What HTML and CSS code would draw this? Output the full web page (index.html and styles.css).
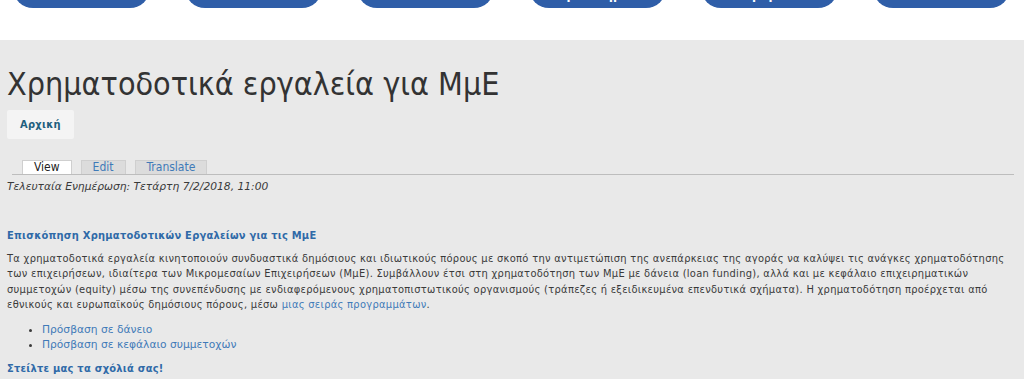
FILE: index.html
```html
<!DOCTYPE html>
<html lang="el">
<head>
<meta charset="utf-8">
<title>Χρηματοδοτικά εργαλεία για ΜμΕ</title>
<link rel="stylesheet" href="styles.css">
</head>
<body>
<header class="topbar">
  <nav class="navbtns">
    <a class="navbtn" href="#"></a>
    <a class="navbtn" href="#"></a>
    <a class="navbtn" href="#"></a>
    <a class="navbtn" href="#">Κέντρο Υπηρεσιών</a>
    <a class="navbtn" href="#">Βραβεία</a>
    <a class="navbtn" href="#"></a>
  </nav>
</header>
<main class="content">
  <h1 class="page-title">Χρηματοδοτικά εργαλεία για ΜμΕ</h1>
  <div class="crumbs"><a class="crumb" href="#">Αρχική</a></div>
  <ul class="tabs">
    <li class="tab active"><a href="#">View</a></li>
    <li class="tab"><a href="#">Edit</a></li>
    <li class="tab"><a href="#">Translate</a></li>
  </ul>
  <p class="updated">Τελευταία Ενημέρωση: Τετάρτη 7/2/2018, 11:00</p>
  <h2 class="sub">Επισκόπηση Χρηματοδοτικών Εργαλείων για τις ΜμΕ</h2>
  <p class="body-text">Τα χρηματοδοτικά εργαλεία κινητοποιούν συνδυαστικά δημόσιους και ιδιωτικούς πόρους με σκοπό την αντιμετώπιση της ανεπάρκειας της αγοράς να καλύψει τις ανάγκες χρηματοδότησης των επιχειρήσεων, ιδιαίτερα των Μικρομεσαίων Επιχειρήσεων (ΜμΕ). Συμβάλλουν έτσι στη χρηματοδότηση των ΜμΕ με δάνεια (loan funding), αλλά και με κεφάλαιο επιχειρηματικών συμμετοχών (equity) μέσω της συνεπένδυσης με ενδιαφερόμενους χρηματοπιστωτικούς οργανισμούς (τράπεζες ή εξειδικευμένα επενδυτικά σχήματα). Η χρηματοδότηση προέρχεται από εθνικούς και ευρωπαϊκούς δημόσιους πόρους, μέσω <a href="#">μιας σειράς προγραμμάτων</a>.</p>
  <ul class="links">
    <li><a href="#">Πρόσβαση σε δάνειο</a></li>
    <li><a href="#">Πρόσβαση σε κεφάλαιο συμμετοχών</a></li>
  </ul>
  <h2 class="sub">Στείλτε μας τα σχόλιά σας!</h2>
</main>
</body>
</html>
```
FILE: styles.css
```css
html, body {
  margin: 0;
  padding: 0;
}
body {
  background: #e9e9e9;
  font-family: "DejaVu Sans Condensed", "DejaVu Sans", Tahoma, sans-serif;
  color: #3a3a3a;
  font-size: 11px;
}
a {
  text-decoration: none;
  color: #3f7ab8;
}
.topbar {
  background: #ffffff;
  height: 40px;
  overflow: hidden;
}
.navbtns {
  display: flex;
  gap: 35px;
  padding-left: 13px;
}
.navbtn {
  width: 137px;
  height: 60px;
  margin-top: -52px;
  background: #2f5ea8;
  border-radius: 0 0 20px 20px;
  color: #ffffff;
  font-weight: bold;
  font-size: 13px;
  line-height: 15px;
  display: flex;
  align-items: flex-end;
  justify-content: center;
  text-align: center;
  padding-bottom: 6px;
  box-sizing: border-box;
}
.content {
  padding: 0 7px;
}
.page-title {
  margin: 24px 0 0;
  font-weight: normal;
  font-size: 32px;
  line-height: 40px;
  color: #333333;
}
.crumbs {
  margin-top: 6px;
  display: flex;
}
.crumb {
  background: #f4f4f4;
  color: #1f5f7e;
  font-weight: bold;
  font-size: 11px;
  letter-spacing: 0.3px;
  padding: 0 13px;
  height: 29px;
  line-height: 29px;
  border-radius: 2px;
}
.tabs {
  list-style: none;
  margin: 21px 0 0 5px;
  padding: 0 0 0 10px;
  display: flex;
  gap: 9px;
  border-bottom: 1px solid #bdbdbd;
  width: 992px;
}
.tab a {
  display: block;
  background: #dcdcdc;
  border: 1px solid #cfcfcf;
  border-bottom: none;
  color: #3f7ab8;
  font-size: 12px;
  line-height: 13px;
  padding: 0 11px;
}
.tab.active a {
  background: #ffffff;
  color: #222222;
}
.updated {
  margin: 4px 0 0;
  font-family: "DejaVu Sans", Verdana, sans-serif;
  font-size: 10.7px;
  font-style: italic;
  line-height: 15px;
}
.sub {
  color: #2f6aa8;
  font-size: 11px;
  font-weight: bold;
  letter-spacing: 0.25px;
  margin: 34px 0 0;
  line-height: 15px;
}
.body-text {
  margin: 8px 0 0;
  line-height: 15.4px;
  letter-spacing: 0.3px;
}
.links {
  margin: 9px 0 0;
  padding-left: 35px;
  line-height: 15px;
  font-family: "DejaVu Sans", Verdana, sans-serif;
  font-size: 10.7px;
}
.links li {
  list-style: disc;
}
.links + .sub {
  margin-top: 9px;
}
```
